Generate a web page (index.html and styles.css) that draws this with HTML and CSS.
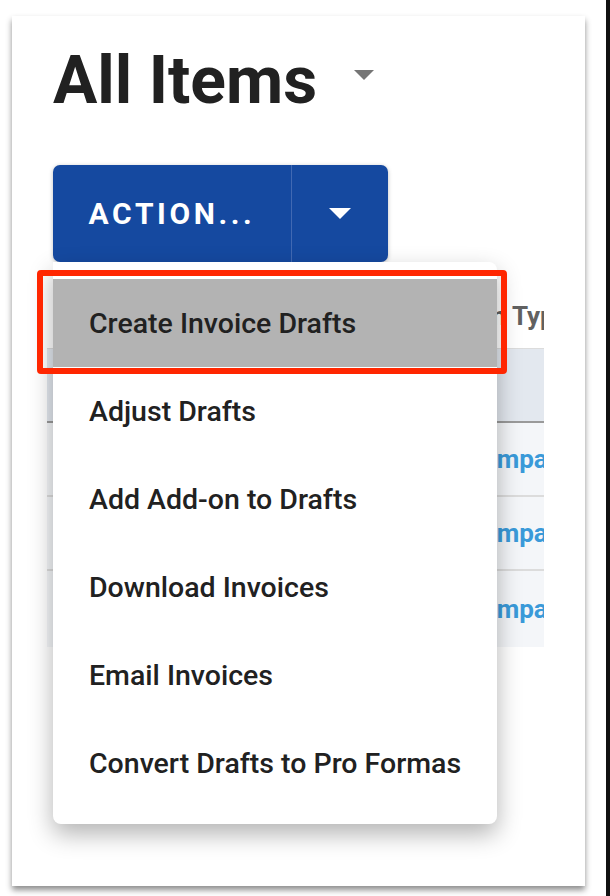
FILE: index.html
```html
<!DOCTYPE html>
<html lang="en">

<head>
    <meta charset="UTF-8">
    <meta name="viewport" content="width=device-width, initial-scale=1.0">
    <title>All Items</title>
    <link rel="stylesheet" href="styles.css">
</head>

<body>
    <div class="card">
        <!-- page title with view switcher -->
        <div class="title-row">
            <h1 class="title">All Items</h1>
            <span class="title-caret"></span>
        </div>

        <div class="toolbar">
            <div class="split-btn">
                <button class="btn-main">ACTION...</button>
                <button class="btn-caret">
                    <svg width="22" height="11" viewBox="0 0 22 11"><path d="M0 0H22L11 11Z" fill="#fff"/></svg>
                </button>
            </div>

            <!-- open action menu, lies over the table -->
            <ul class="menu">
                <li class="menu-item selected">Create Invoice Drafts</li>
                <li class="menu-item">Adjust Drafts</li>
                <li class="menu-item">Add Add-on to Drafts</li>
                <li class="menu-item">Download Invoices</li>
                <li class="menu-item">Email Invoices</li>
                <li class="menu-item">Convert Drafts to Pro Formas</li>
            </ul>
        </div>

        <div class="grid">
            <div class="grid-row head">
                <div class="cell">Customer</div>
                <div class="cell type">Plan Type</div>
            </div>
            <div class="grid-row filter">
                <div class="cell"></div>
                <div class="cell type"></div>
            </div>
            <div class="grid-row">
                <div class="cell">Acme</div>
                <div class="cell type link">Company</div>
            </div>
            <div class="grid-row">
                <div class="cell">Globex</div>
                <div class="cell type link">Company</div>
            </div>
            <div class="grid-row">
                <div class="cell">Initech</div>
                <div class="cell type link">Company</div>
            </div>
        </div>
    </div>
    <div class="edge"></div>
</body>

</html>
```

FILE: styles.css
```css
body {
    margin: 0;
    background: #fff;
    display: flex;
    font-family: Roboto, "Liberation Sans", sans-serif;
    color: #212121;
}

.card {
    width: 573px;
    height: 870px;
    margin: 16px 0 0 12px;
    padding-top: 32px;
    box-sizing: border-box;
    background: #fff;
    box-shadow: 0 4px 6px rgba(0, 0, 0, 0.45);
}

.edge {
    width: 4px;
    height: 896px;
    margin-left: auto;
    background: #111;
}

.title-row {
    display: flex;
    align-items: flex-start;
    padding-left: 41px;
}

.title {
    margin: 0;
    font-size: 66px;
    line-height: 66px;
    font-weight: 700;
    color: #212121;
}

.title-caret {
    width: 0;
    height: 0;
    margin: 22px 0 0 37px;
    border-left: 10px solid transparent;
    border-right: 10px solid transparent;
    border-top: 10px solid #757575;
}

.toolbar {
    position: relative;
    margin-top: 51px;
    padding-left: 41px;
}

.split-btn {
    display: flex;
    width: 335px;
    height: 97px;
    border-radius: 7px;
    background: #1549a0;
    box-shadow: 0 1px 4px rgba(0, 0, 0, 0.25);
    overflow: hidden;
}

.split-btn button {
    border: 0;
    background: transparent;
    color: #fff;
    font-family: inherit;
    padding: 0;
}

.btn-main {
    width: 239px;
    font-size: 30px;
    font-weight: 700;
    letter-spacing: 3.6px;
    border-right: 1px solid #4169b3 !important;
}

.btn-caret {
    flex: 1;
    display: flex;
    align-items: center;
    justify-content: center;
}

.menu {
    position: absolute;
    top: 100%;
    left: 41px;
    z-index: 2;
    width: 444px;
    margin: 0;
    padding: 17px 0;
    list-style: none;
    background: #fff;
    border-radius: 0 8px 8px 8px;
    box-shadow: 0 10px 24px rgba(0, 0, 0, 0.3);
}

.menu-item {
    position: relative;
    display: flex;
    align-items: center;
    height: 88px;
    padding-left: 36px;
    font-size: 28.5px;
    font-weight: 500;
    color: #212121;
}

.menu-item.selected {
    background: #b3b3b3;
}

/* red annotation frame round the chosen entry */
.menu-item.selected::after {
    content: "";
    position: absolute;
    top: -9px;
    bottom: -7px;
    left: -16px;
    right: -10px;
    border: 6px solid #ff2600;
    border-radius: 4px;
}

.grid {
    width: 497px;
    margin-left: 35px;
    overflow: hidden;
}

.grid-row {
    display: flex;
    height: 74px;
    align-items: center;
    background: #f4f6f9;
    border-bottom: 2px solid #dcdcdc;
    box-sizing: border-box;
}

.grid-row.head {
    height: 87px;
    padding-top: 22px;
    background: #fff;
    border-bottom: 1px solid #dcdcdc;
}

.grid-row.filter {
    background: #e3e8ef;
    border-bottom: 2px solid #9a9a9a;
}

.grid-row:last-child {
    border-bottom: 0;
    height: 76px;
}

.cell {
    width: 407px;
    flex: none;
    padding-left: 20px;
    box-sizing: border-box;
    white-space: nowrap;
}

.cell.type {
    width: 200px;
    padding-left: 0;
    font-size: 26px;
    font-weight: 700;
    color: #616161;
}

.cell.link {
    padding-left: 11px;
    color: #3a9ad9;
}
```
